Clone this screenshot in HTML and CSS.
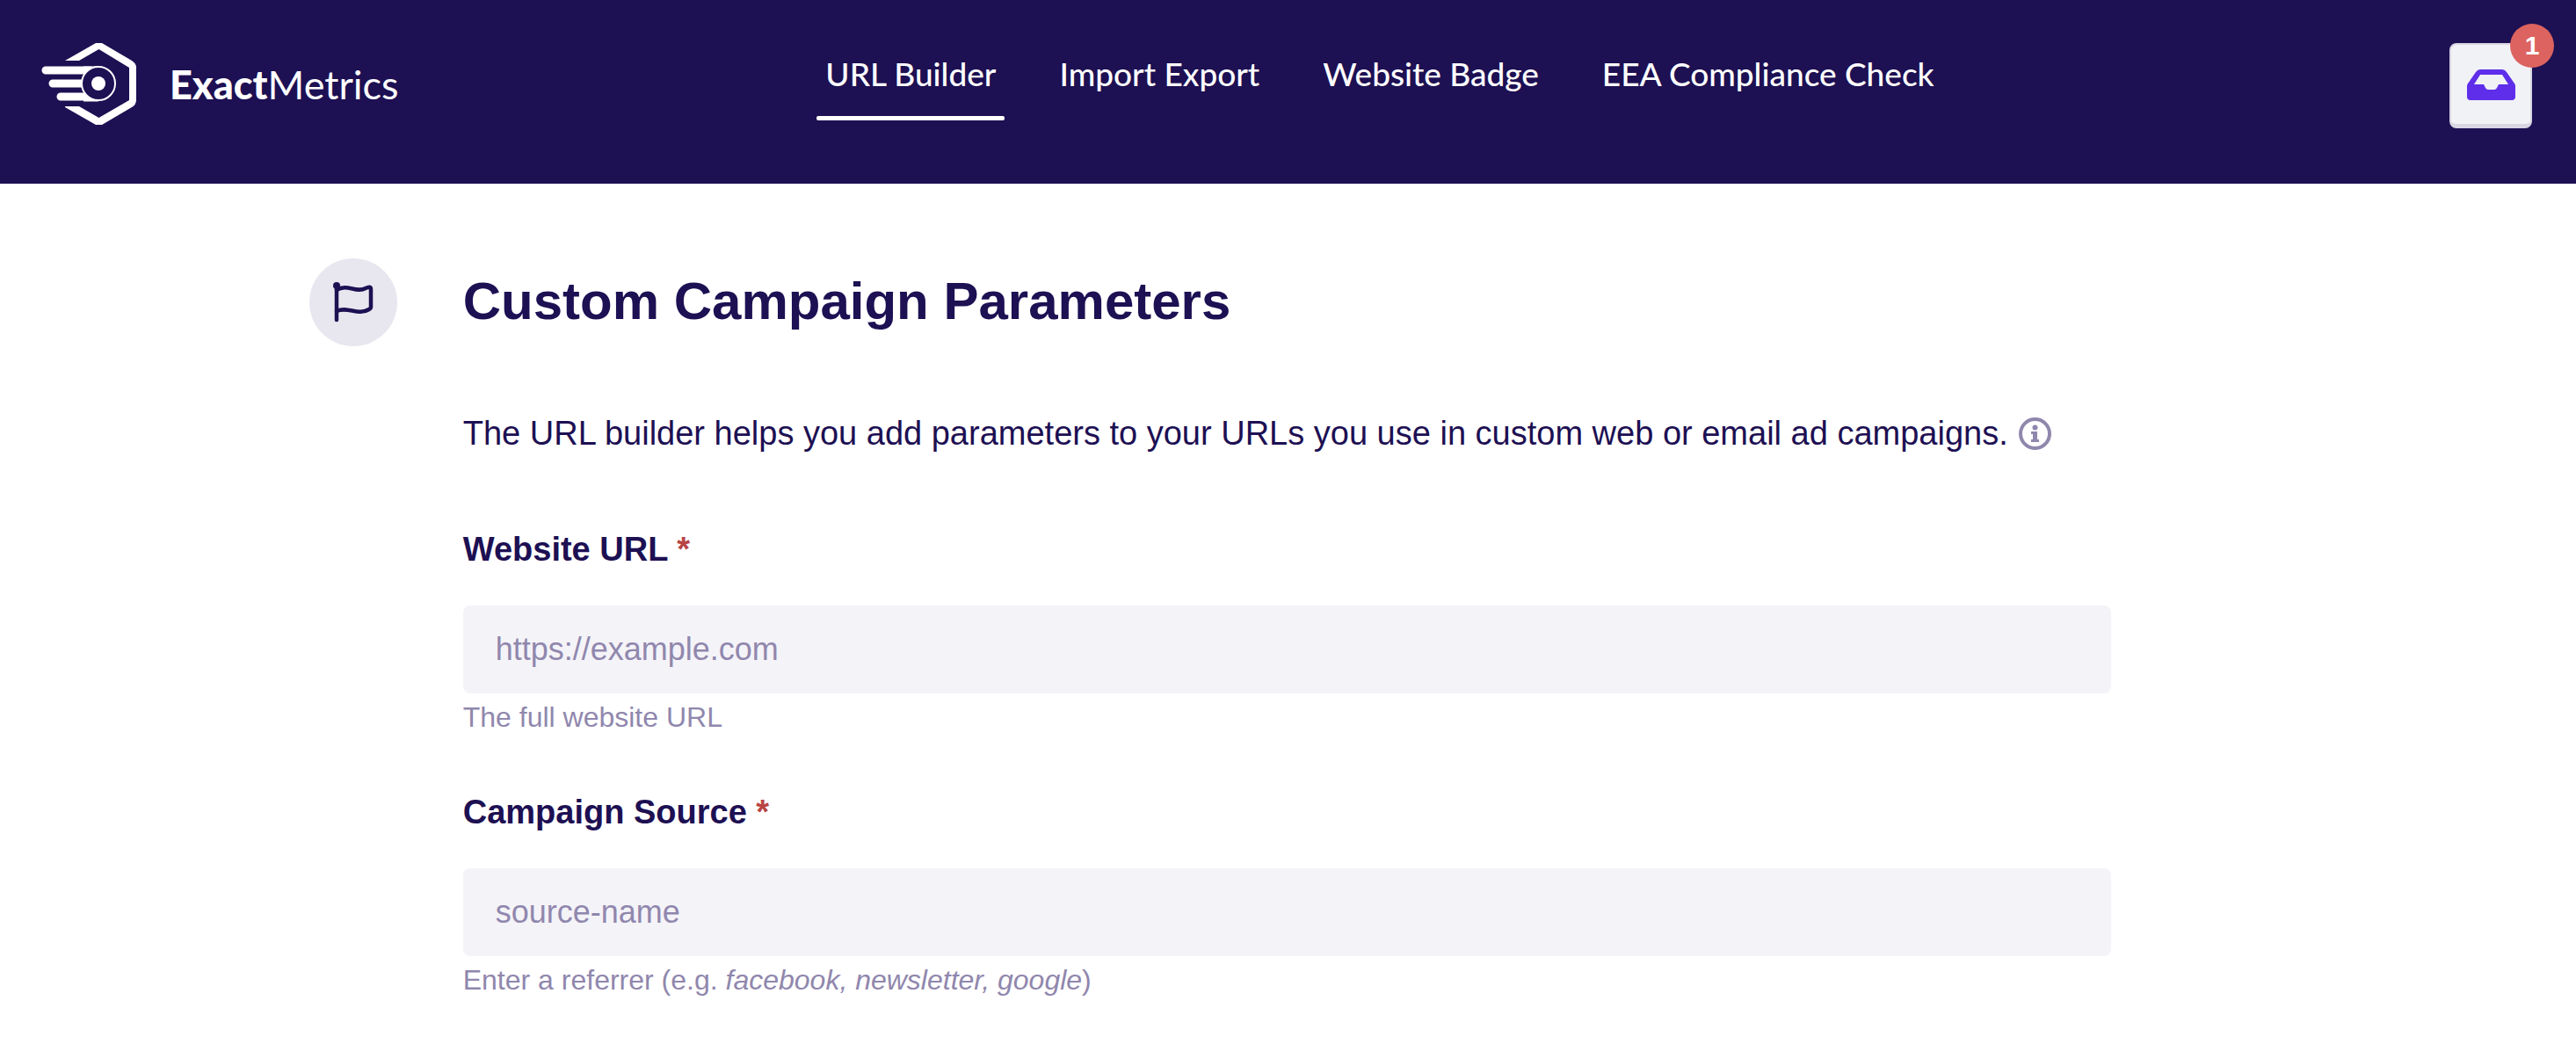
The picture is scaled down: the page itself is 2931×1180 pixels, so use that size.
FILE: index.html
```html
<!DOCTYPE html>
<html lang="en">
<head>
    <meta charset="UTF-8">
    <meta name="viewport" content="width=device-width, initial-scale=1.0">
    <title>URL Builder - ExactMetrics</title>
    <link rel="stylesheet" href="styles.css">
</head>
<body>

<header class="header">
    <a class="logo" href="#">
        <svg class="logo-mark" viewBox="0 0 108 93" aria-hidden="true">
            <path d="M27 20 L62 0 H69 L103 20 Q108 23 108 28 V65 Q108 70 103 73 L69 93 H62 L27 73 V72 H43 L65.500 85 L100 65 V28 L65.500 7 L43 20 Z" fill="#fff"/>
            <g fill="none" stroke="#fff">
                <path d="M5 31 H56 M13 46 H48 M22 61 H56" stroke-width="9" stroke-linecap="round"/>
                <path d="M48 27.500 H65 M48 65.500 H65" stroke-width="2"/>
                <circle cx="65" cy="46" r="19" fill="#1d1053" stroke-width="2"/>
            </g>
            <circle cx="65" cy="46" r="8" fill="#fff"/>
        </svg>
        <span class="logo-text"><b>Exact</b>Metrics</span>
    </a>
    <nav class="nav">
        <a class="nav-link active" href="#">URL Builder</a>
        <a class="nav-link" href="#">Import Export</a>
        <a class="nav-link" href="#">Website Badge</a>
        <a class="nav-link" href="#">EEA Compliance Check</a>
    </nav>
    <button class="inbox" type="button" aria-label="Notifications">
        <svg class="inbox-icon" viewBox="0 0 55 35" aria-hidden="true">
            <path fill="#5f2eea" fill-rule="evenodd" d="M15 0 H40 Q43 0 45 3 L54 16 Q55 17 55 19 V31 Q55 35 51 35 H4 Q0 35 0 31 V19 Q0 17 1 16 L10 3 Q12 0 15 0 Z M15 6 L8 17 H19 L21 21 Q22 23 24 23 H31 Q33 23 34 21 L36 17 H47 L40 6 Z"/>
        </svg>
        <span class="badge">1</span>
    </button>
</header>

<main class="container">
    <div class="section-icon">
        <svg class="flag-icon" viewBox="0 0 46 46" aria-hidden="true">
            <g fill="none" stroke="#1d1053" stroke-width="4.500" stroke-linecap="round" stroke-linejoin="round">
                <path d="M4 5 V43"/>
                <path d="M4 9 C16 1 26 13 37 7 Q43 4 43 8 V28 Q43 30 41 31 C28 39 17 27 4 33"/>
            </g>
            <circle cx="4" cy="4" r="4" fill="#1d1053"/>
        </svg>
    </div>
    <form class="builder">
        <h1>Custom Campaign Parameters</h1>
        <p class="intro">
            The URL builder helps you add parameters to your URLs you use in custom web or email ad campaigns.
            <svg class="info-icon" viewBox="0 0 37 37" aria-hidden="true">
                <circle cx="18.500" cy="18.500" r="16.500" fill="none" stroke="#9087ad" stroke-width="4"/>
                <circle cx="18.500" cy="11.500" r="3" fill="#9087ad"/>
                <path fill="#9087ad" d="M14 16 H21 V25 H23 V28 H14 V25 H16 V19 H14 Z"/>
            </svg>
        </p>
        <div class="form-group">
            <label for="website-url">Website URL <span class="required">*</span></label>
            <input type="text" id="website-url" name="website-url" placeholder="https://example.com">
            <p class="hint">The full website URL</p>
        </div>
        <div class="form-group">
            <label for="campaign-source">Campaign Source <span class="required">*</span></label>
            <input type="text" id="campaign-source" name="campaign-source" placeholder="source-name">
            <p class="hint">Enter a referrer (e.g. <i>facebook, newsletter, google</i>)</p>
        </div>
    </form>
</main>

</body>
</html>
```
FILE: styles.css
```css
* {
    box-sizing: border-box;
}
body {
    font-family: "Helvetica Neue", "Liberation Sans", Arial, sans-serif;
    margin: 0;
    background-color: #fff;
    color: #1d1053;
}
.header {
    display: grid;
    grid-template-columns: 1fr auto 1fr;
    align-items: start;
    height: 209px;
    padding: 49px 50px 0 47px;
    background-color: #1d1053;
    font-family: Lato, sans-serif;
    color: #fff;
}
.logo {
    display: flex;
    align-items: center;
    gap: 38px;
    color: #fff;
    text-decoration: none;
}
.logo-mark {
    width: 108px;
    height: 93px;
}
.logo-text {
    font-size: 45px;
    line-height: 48px;
}
.logo-text b {
    font-weight: 900;
}
.nav {
    display: flex;
    gap: 52px;
    padding-left: 212px;
}
.nav-link {
    padding: 11px 10px 0;
    font-size: 37px;
    font-weight: 500;
    line-height: 48px;
    color: #fff;
    text-decoration: none;
}
.nav-link.active::after {
    content: "";
    display: block;
    height: 5px;
    margin: 24px -10px 0;
    border-radius: 2px;
    background-color: #fff;
}
.inbox {
    position: relative;
    display: flex;
    align-items: center;
    justify-content: center;
    justify-self: end;
    width: 94px;
    height: 97px;
    padding: 0;
    border: 2px solid #d9d6e3;
    border-bottom-width: 5px;
    border-radius: 8px;
    background-color: #f1f2f6;
    cursor: pointer;
}
.inbox-icon {
    width: 55px;
    height: 35px;
}
.badge {
    position: absolute;
    top: -24px;
    right: -27px;
    width: 50px;
    height: 50px;
    border-radius: 50%;
    background-color: #dc635f;
    color: #fff;
    font-family: "Liberation Sans", Arial, sans-serif;
    font-size: 30px;
    font-weight: bold;
    line-height: 50px;
    text-align: center;
}
.container {
    display: flex;
    gap: 75px;
    width: 76%;
    margin: 0 auto;
    padding-top: 85px;
}
.section-icon {
    display: flex;
    flex: none;
    align-items: center;
    justify-content: center;
    width: 100px;
    height: 100px;
    border-radius: 50%;
    background-color: #e8e7ef;
}
.flag-icon {
    width: 46px;
    height: 46px;
}
.builder {
    flex: 1;
    padding-right: 177px;
}
h1 {
    margin: 0 0 74px;
    font-size: 60px;
    line-height: 98px;
}
.intro {
    display: flex;
    align-items: center;
    gap: 12px;
    margin: 0 0 78px;
    font-size: 38px;
    line-height: 54px;
}
.info-icon {
    flex: none;
    width: 37px;
    height: 37px;
}
.form-group {
    margin-bottom: 58px;
}
label {
    display: block;
    margin-bottom: 37px;
    font-size: 38px;
    font-weight: bold;
    line-height: 54px;
}
.required {
    color: #b94444;
}
input {
    display: block;
    width: 100%;
    height: 100px;
    padding: 0 37px;
    border: none;
    border-radius: 8px;
    background-color: #f4f3f8;
    font-family: inherit;
    font-size: 36px;
    color: #1d1053;
}
input::placeholder {
    color: #9087ad;
    opacity: 1;
}
.hint {
    margin: 4px 0 0;
    font-size: 32px;
    line-height: 46px;
    color: #9087ad;
}
```
